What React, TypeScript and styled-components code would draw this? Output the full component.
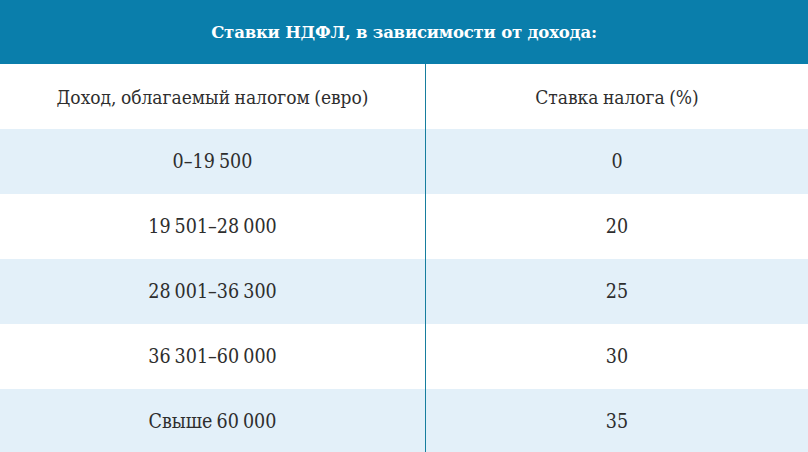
import React from "react";
import styled, { createGlobalStyle } from "styled-components";

const Global = createGlobalStyle`
  html, body { margin: 0; padding: 0; background: #ffffff; }
  body { font-family: "DejaVu Serif", "Liberation Serif", serif; }
`;

const Table = styled.div`
  width: 808px;
  height: 452px;
  overflow: hidden;
  display: flex;
  flex-direction: column;
`;

const Title = styled.div`
  height: 64px;
  flex: none;
  background: #0a7eab;
  color: #ffffff;
  font-weight: bold;
  font-size: 16.5px;
  display: flex;
  align-items: center;
  justify-content: center;
  letter-spacing: -0.2px;
`;

const Row = styled.div<{ $shade: boolean }>`
  height: 65px;
  flex: none;
  display: grid;
  grid-template-columns: 425px 1px 1fr;
  background: ${(p) => (p.$shade ? "#e3f0f9" : "#ffffff")};
`;

const Cell = styled.div<{ $head?: boolean }>`
  display: flex;
  align-items: center;
  justify-content: center;
  color: #2e2e2e;
  font-size: ${(p) => (p.$head ? "19px" : "19.5px")};
  word-spacing: ${(p) => (p.$head ? "-1px" : "-1.5px")};
  font-family: "DejaVu Serif Condensed", "DejaVu Serif", serif;
`;

const Divider = styled.div`
  background: #177e9e;
`;

const rows: [string, string][] = [
  ["0–19 500", "0"],
  ["19 501–28 000", "20"],
  ["28 001–36 300", "25"],
  ["36 301–60 000", "30"],
  ["Свыше 60 000", "35"],
];

export default function App() {
  return (
    <>
      <Global />
      <Table>
        <Title>Ставки НДФЛ, в зависимости от дохода:</Title>
        <Row $shade={false}>
          <Cell $head>Доход, облагаемый налогом (евро)</Cell>
          <Divider />
          <Cell $head>Ставка налога (%)</Cell>
        </Row>
        {rows.map(([a, b], i) => (
          <Row key={a} $shade={i % 2 === 0}>
            <Cell>{a}</Cell>
            <Divider />
            <Cell>{b}</Cell>
          </Row>
        ))}
      </Table>
    </>
  );
}
